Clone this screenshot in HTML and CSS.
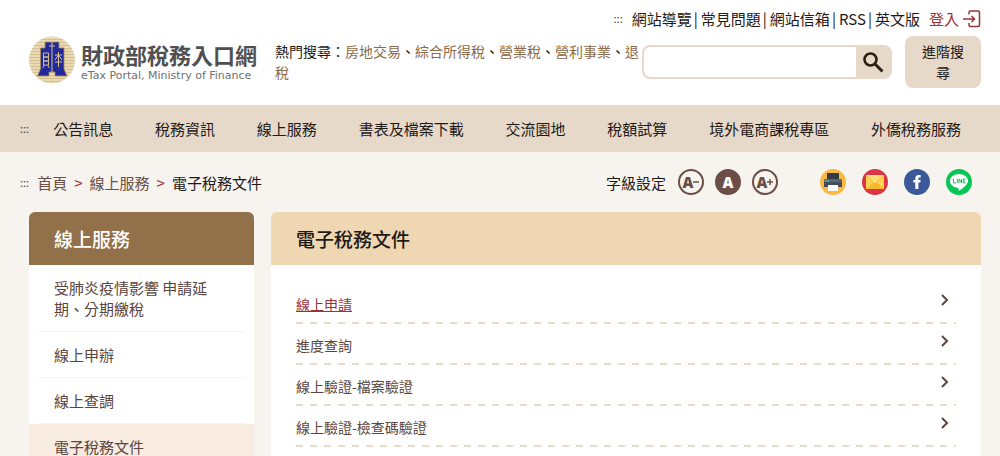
FILE: index.html
```html
<!DOCTYPE html>
<html lang="zh-Hant">
<head>
<meta charset="utf-8">
<meta name="viewport" content="width=device-width, initial-scale=1">
<title>財政部稅務入口網</title>
<link rel="stylesheet" href="styles.css">
</head>
<body>
<header class="header">
  <nav class="top-links" aria-label="網站連結">
    <a class="access-key" href="#">:::</a>
    <ul class="top-list">
      <li><a href="#">網站導覽</a></li>
      <li><a href="#">常見問題</a></li>
      <li><a href="#">網站信箱</a></li>
      <li><a href="#">RSS</a></li>
      <li><a href="#">英文版</a></li>
    </ul>
    <a class="login" href="#">登入
      <svg width="18" height="18" viewBox="0 0 18 18" fill="none" stroke="currentColor" stroke-width="1.5" aria-hidden="true">
        <path d="M6 4.500V2.500Q6 1 7.500 1h7.500Q16.500 1 16.500 2.500v12.500Q16.500 16.500 15 16.500H7.500Q6 16.500 6 15v-2M0 9h11M8.500 6l3 3-3 3"/>
      </svg>
    </a>
  </nav>
  <div class="header-main">
    <a class="logo" href="#">
      <svg class="logo-mark" width="46" height="48" viewBox="0 0 46 48" aria-hidden="true">
        <defs>
          <pattern id="stripes" width="4" height="3" patternUnits="userSpaceOnUse">
            <rect width="4" height="3" fill="#ead9b2"/><rect width="4" height="1" fill="#d3c196"/>
          </pattern>
        </defs>
        <ellipse cx="23" cy="24" rx="23" ry="23.500" fill="url(#stripes)"/>
        <path d="M16 6h14v6h5v21l3 7H26v-4h-6v4H8.500l3-7V12H16z" fill="#23289a" stroke="#a98d55" stroke-width=".8"/>
        <path d="M23 5v31M20 10h6M14.500 17h5v4h-5zM14.500 21h5v4h-5zM14.500 25h5v4h-5zM15.500 29l-2 3M18.500 29l2 3M29.500 16v15M26 19h7M29.500 19l-3.500 5M29.500 19l3.500 5M26 26h7" fill="none" stroke="#d6c08c" stroke-width="1"/>
      </svg>
      <span class="logo-text">
        <span class="logo-zh">財政部稅務入口網</span>
        <span class="logo-en">eTax Portal, Ministry of Finance</span>
      </span>
    </a>
    <p class="hot">熱門搜尋：<a href="#">房地交易</a>、<a href="#">綜合所得稅</a>、<a href="#">營業稅</a>、<a href="#">營利事業</a>、<a href="#">退稅</a></p>
    <form class="search">
      <input class="search-input" type="text" aria-label="搜尋">
      <button class="search-button" type="button" aria-label="搜尋">
        <svg width="22" height="22" viewBox="0 0 22 22" fill="none" stroke="#2b200f" aria-hidden="true">
          <circle cx="8.500" cy="8.500" r="6" stroke-width="2.600"/><path d="M12.500 12.500l8 8" stroke-width="3"/>
        </svg>
      </button>
    </form>
    <button class="advanced" type="button">進階搜尋</button>
  </div>
</header>

<nav class="main-nav" aria-label="主選單">
  <a class="access-key" href="#">:::</a>
  <ul class="main-list">
    <li><a href="#">公告訊息</a></li>
    <li><a href="#">稅務資訊</a></li>
    <li><a href="#">線上服務</a></li>
    <li><a href="#">書表及檔案下載</a></li>
    <li><a href="#">交流園地</a></li>
    <li><a href="#">稅額試算</a></li>
    <li><a href="#">境外電商課稅專區</a></li>
    <li><a href="#">外僑稅務服務</a></li>
  </ul>
</nav>

<div class="toolbar">
  <nav class="breadcrumb" aria-label="導覽路徑">
    <a class="access-key" href="#">:::</a>
    <a href="#">首頁</a><span class="separator">&gt;</span><a href="#">線上服務</a><span class="separator">&gt;</span><span class="current">電子稅務文件</span>
  </nav>
  <div class="font-size">
    <span>字級設定</span>
    <div class="size-buttons">
      <button class="size-button" type="button" aria-label="縮小字級">A<svg width="6" height="6" viewBox="0 0 6 6" stroke="currentColor" stroke-width="1.500" aria-hidden="true"><path d="M0 3h6"/></svg></button>
      <button class="size-button size-active" type="button" aria-label="一般字級">A</button>
      <button class="size-button" type="button" aria-label="放大字級">A<svg width="6" height="6" viewBox="0 0 6 6" stroke="currentColor" stroke-width="1.500" aria-hidden="true"><path d="M0 3h6M3 0v6"/></svg></button>
    </div>
  </div>
  <div class="share">
    <button class="share-button" type="button" aria-label="列印">
      <svg width="26" height="26" viewBox="0 0 26 26" aria-hidden="true">
        <circle cx="13" cy="13" r="13" fill="#f9b943"/>
        <path d="M7 4h12v7H7z" fill="#353b45"/><path d="M5 10h16q1 0 1 1v7H4v-7q0-1 1-1z" fill="#596674"/>
        <path d="M4 13h18v5H4z" fill="#434d59"/><path d="M5 12h4" stroke="#5fc4dc"/><path d="M8 16h10v6H8z" fill="#fff"/>
      </svg>
    </button>
    <button class="share-button" type="button" aria-label="電子郵件">
      <svg width="26" height="26" viewBox="0 0 26 26" aria-hidden="true">
        <circle cx="13" cy="13" r="13" fill="#dc3444"/>
        <path d="M4 6h18v14H4z" fill="#ffd34f"/><path d="M4 20l9-8 9 8z" fill="#f7b92e"/><path d="M4 6h18l-9 9z" fill="#ffdf75"/><path d="M4 6l9 9 9-9" fill="none" stroke="#efac29" stroke-width=".7"/>
      </svg>
    </button>
    <a class="share-button" href="#" aria-label="Facebook">
      <svg width="26" height="26" viewBox="0 0 26 26" aria-hidden="true">
        <circle cx="13" cy="13" r="13" fill="#3b5998"/>
        <path d="M11.300 20v-6.500H9.300V11h2V9.500Q11.300 6 14.500 6h2.200v2.600h-1.300q-1 0-1 1V11h2.300l-.4 2.500h-1.900V20z" fill="#fff"/>
      </svg>
    </a>
    <a class="share-button" href="#" aria-label="LINE">
      <svg width="26" height="26" viewBox="0 0 26 26" aria-hidden="true">
        <circle cx="13" cy="13" r="13" fill="#06c755"/>
        <path d="M13 5c5 0 9 3 9 7 0 3.500-5 7.500-9 9.500-.7.300-.6-.2-.5-2.500C7.700 18.700 4 15.800 4 12c0-4 4-7 9-7z" fill="#fff"/>
        <path d="M7.500 10v4H10M11.300 10v4M13 14v-4l2.500 4v-4M19.500 10h-2.200v4h2.200M17.300 12h2" fill="none" stroke="#06c755" stroke-width="1"/>
      </svg>
    </a>
  </div>
</div>

<div class="content">
  <aside class="sidebar">
    <h2 class="side-title">線上服務</h2>
    <ul class="side-list">
      <li><a href="#">受肺炎疫情影響 申請延期、分期繳稅</a></li>
      <li><a href="#">線上申辦</a></li>
      <li><a href="#">線上查調</a></li>
      <li class="side-active"><a href="#">電子稅務文件</a></li>
    </ul>
  </aside>
  <main class="panel">
    <h1 class="panel-title">電子稅務文件</h1>
    <ul class="link-list">
      <li><a class="link-active" href="#"><span>線上申請</span><svg width="8" height="12" viewBox="0 0 8 12" aria-hidden="true"><path d="M1 1l5 5-5 5"/></svg></a></li>
      <li><a href="#"><span>進度查詢</span><svg width="8" height="12" viewBox="0 0 8 12" aria-hidden="true"><path d="M1 1l5 5-5 5"/></svg></a></li>
      <li><a href="#"><span>線上驗證-檔案驗證</span><svg width="8" height="12" viewBox="0 0 8 12" aria-hidden="true"><path d="M1 1l5 5-5 5"/></svg></a></li>
      <li><a href="#"><span>線上驗證-檢查碼驗證</span><svg width="8" height="12" viewBox="0 0 8 12" aria-hidden="true"><path d="M1 1l5 5-5 5"/></svg></a></li>
    </ul>
  </main>
</div>
</body>
</html>
```
FILE: styles.css
```css
* { box-sizing: border-box; }

body {
  margin: 0;
  background: #f7f4ef;
  color: #1f1a17;
  font-family: "Noto Sans CJK TC", "Noto Sans", sans-serif;
  font-size: 15px;
  line-height: 21px;
}

ul { margin: 0; padding: 0; list-style: none; }
a { color: inherit; text-decoration: none; }
button { font: inherit; color: inherit; border: 0; padding: 0; background: none; cursor: pointer; }
svg { display: block; flex: none; }

.access-key { font-size: 11px; color: #444; }

/* Header */
.header { background: #fff; padding: 8px 19px 17px 29px; }
.top-links { display: flex; align-items: center; justify-content: flex-end; gap: 9px; }
.top-list { display: flex; }
.top-list li + li::before { content: "|"; padding: 0 3px 0 2px; }
.login { display: flex; align-items: center; gap: 4px; color: #9b3238; }

.header-main { display: flex; align-items: flex-start; margin-top: 7px; }
.logo { display: flex; align-items: center; gap: 6px; flex: none; width: 246px; }
.logo-text { display: flex; flex-direction: column; padding-top: 4px; color: #505050; white-space: nowrap; }
.logo-zh { font-size: 22px; font-weight: 700; line-height: 28px; }
.logo-en { font-family: "DejaVu Sans", sans-serif; font-size: 11px; line-height: 16px; color: #707070; }
.hot { flex: 1; margin: 5px 0 0; font-size: 14px; }
.hot a { color: #8b6a47; }
.search {
  display: flex;
  flex: none;
  width: 25%;
  min-width: 250px;
  height: 34px;
  margin: 9px 13px 0 0;
  border: 2px solid #e7d9c9;
  border-radius: 8px;
  background: #e7d9c9;
  overflow: hidden;
}
.search-input { flex: 1; min-width: 0; border: 0; border-radius: 6px 0 0 6px; background: #fff; font: inherit; padding: 0 8px; }
.search-button { display: flex; align-items: center; justify-content: center; width: 34px; }
.advanced { flex: none; width: 76px; padding: 5px 16px; border-radius: 8px; background: #e7d9c9; font-size: 14px; }

/* Main navigation */
.main-nav { display: flex; align-items: center; gap: 24px; padding: 13px 39px 13px 20px; background: #e7d9c9; }
.main-list { display: flex; flex: 1; justify-content: space-between; }

/* Breadcrumb and tools */
.toolbar { display: flex; align-items: center; padding: 17px 28px 17px 20px; }
.breadcrumb { display: flex; align-items: center; flex: 1; color: #6b4f47; }
.breadcrumb .access-key { margin-right: 8px; }
.separator { padding: 0 7px; color: #9b3238; }
.current { color: #1f1a17; }
.font-size { display: flex; align-items: center; gap: 12px; }
.size-buttons { display: flex; gap: 11px; }
.size-button {
  display: flex;
  align-items: center;
  justify-content: center;
  width: 26px;
  height: 26px;
  border: 2px solid #6b4f47;
  border-radius: 50%;
  color: #6b4f47;
  font-family: "Open Sans", sans-serif;
  font-size: 15px;
  font-weight: 800;
}
.size-active { background: #6b4f47; color: #fff; }
.share { display: flex; gap: 16px; margin-left: 42px; }
.share-button { display: block; width: 26px; height: 26px; }

/* Content */
.content { display: grid; grid-template-columns: 225px 1fr; gap: 17px; padding: 0 19px 0 29px; }
.side-title, .panel-title { margin: 0; padding: 16px 25px; border-radius: 6px 6px 0 0; font-size: 19px; font-weight: 500; line-height: 21px; }
.side-title { background: #92704a; color: #fff; }
.panel-title { background: #eed7b2; }
.sidebar, .panel { background: #fff; border-radius: 6px; }

.side-list { color: #5a4540; }
.side-list li { padding: 0 9px; }
.side-list a { display: block; padding: 12px 16px; border-bottom: 1px solid #f5f2f0; }
.side-list .side-active { background: #f8ebe0; }
.side-list .side-active a { border-bottom: 0; }

.link-list { padding: 18px 25px; color: #5a4540; font-size: 14px; }
.link-list a {
  display: flex;
  align-items: flex-start;
  justify-content: space-between;
  padding: 11px 7px 9px 0;
  background: repeating-linear-gradient(to right, #e5dacb 0 7px, transparent 7px 14px) bottom / 100% 2px no-repeat;
}
.link-list svg { fill: none; stroke: #5a4540; stroke-width: 2; }
.link-list .link-active { color: #9b3238; }
.link-active span { text-decoration: underline; }
```
